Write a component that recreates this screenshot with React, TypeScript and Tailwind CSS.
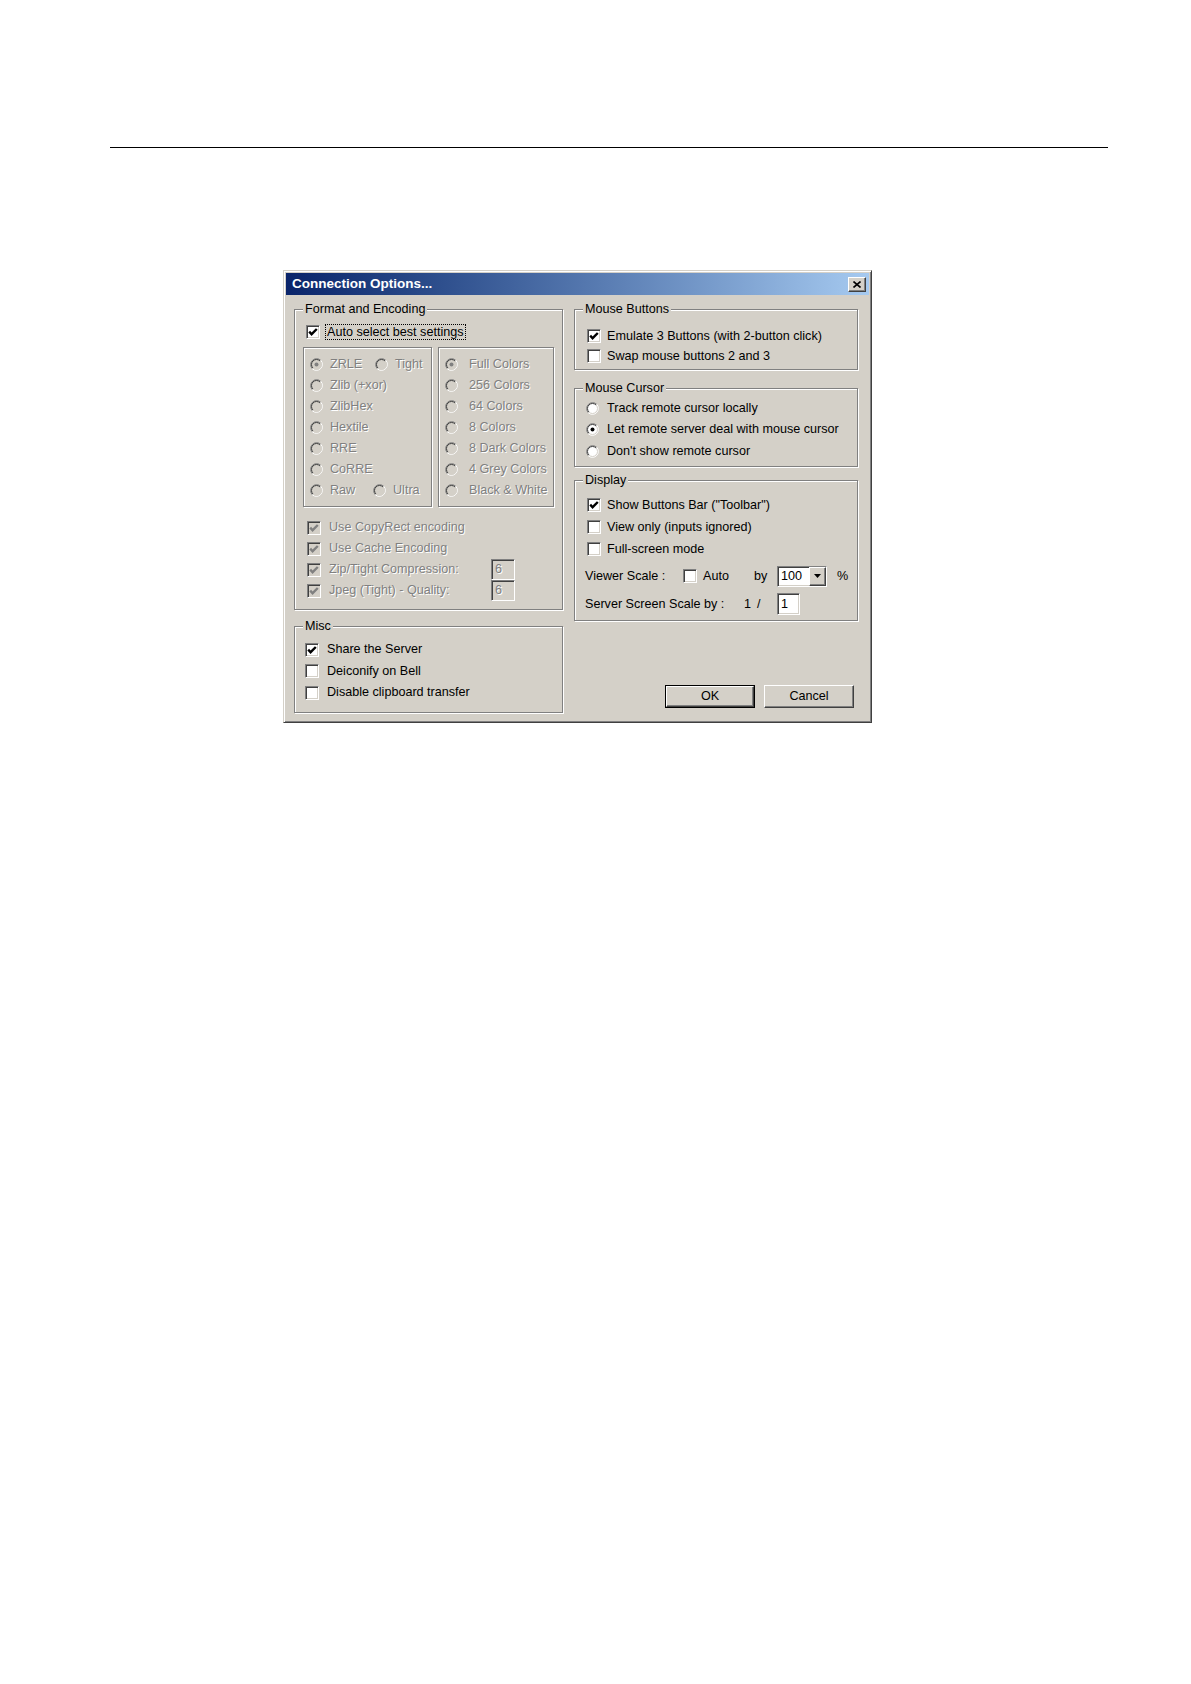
import type { ReactNode } from "react";

const sunken =
  "border border-t-[#808080] border-l-[#808080] border-r-white border-b-white shadow-[inset_1px_1px_0_#404040,inset_-1px_-1px_0_#d4d0c8]";
const raised =
  "border border-t-white border-l-white border-r-[#404040] border-b-[#404040] shadow-[inset_-1px_-1px_0_#808080,inset_1px_1px_0_#d4d0c8]";
const etched = "border border-[#808080] shadow-[1px_1px_0_#fff,inset_1px_1px_0_#fff]";
const dis = "text-[#808080] [text-shadow:1px_1px_0_#fff]";

function Checkbox({ checked = false, disabled = false }: { checked?: boolean; disabled?: boolean }) {
  return (
    <span
      className={`${sunken} flex h-[14px] w-[14px] shrink-0 ${disabled ? "bg-[#d4d0c8]" : "bg-white"}`}
    >
      {checked && (
        <svg viewBox="0 0 12 12" className="h-full w-full">
          <path
            d="M2.2 5.6L4.6 8.2L9.8 3"
            fill="none"
            stroke={disabled ? "#808080" : "#000"}
            strokeWidth="2.4"
          />
        </svg>
      )}
    </span>
  );
}

function Radio({ checked = false, disabled = false }: { checked?: boolean; disabled?: boolean }) {
  return (
    <svg viewBox="0 0 13 13" className="h-[13px] w-[13px] shrink-0">
      <circle cx="6.5" cy="6.5" r="5.5" fill={disabled ? "#d4d0c8" : "#fff"} />
      <path d="M2.26 10.74A6 6 0 0 1 10.74 2.26" fill="none" stroke="#808080" />
      <path d="M10.74 2.26A6 6 0 0 1 2.26 10.74" fill="none" stroke="#fff" />
      <path d="M2.96 10.04A5 5 0 0 1 10.04 2.96" fill="none" stroke="#404040" />
      <path d="M10.04 2.96A5 5 0 0 1 2.96 10.04" fill="none" stroke="#d4d0c8" />
      {checked && <circle cx="6.5" cy="6.5" r="2" fill={disabled ? "#808080" : "#000"} />}
    </svg>
  );
}

function Group({ label, className = "", children }: { label: string; className?: string; children: ReactNode }) {
  return (
    <fieldset className={`${etched} ${className}`}>
      <legend className="ml-[8px] bg-[#d4d0c8] px-[2px] leading-[14px]">{label}</legend>
      {children}
    </fieldset>
  );
}

function CheckRow({ label, checked, h = "h-[20px]" }: { label: string; checked?: boolean; h?: string }) {
  return (
    <div className={`flex ${h} items-center`}>
      <Checkbox checked={checked} />
      <span className="ml-[6px]">{label}</span>
    </div>
  );
}

export default function App() {
  return (
    <div className="min-h-[1684px] bg-white pt-[147px] font-['Liberation_Sans',Arial,sans-serif] text-[12.6px] text-black">
      <div className="ml-[110px] h-px w-[998px] bg-black" />

      <div
        className={`ml-[283px] mt-[122px] flex h-[453px] w-[589px] flex-col border border-[#d4d0c8] border-r-[#404040] border-b-[#404040] bg-[#d4d0c8] p-[2px] shadow-[inset_1px_1px_0_#fff,inset_-1px_-1px_0_#808080]`}
      >
        {/* Title bar */}
        <div className="flex h-[22px] shrink-0 items-center justify-between bg-linear-to-r from-[#0a246a] to-[#a6caf0] pl-[6px] pr-[3px]">
          <span className="text-[13.5px] font-bold leading-none text-white">Connection Options...</span>
          <button className={`${raised} flex h-[15px] w-[18px] items-center justify-center bg-[#d4d0c8]`}>
            <svg viewBox="0 0 8 7" className="h-[7px] w-[8px]">
              <path d="M0.5 0.5L7.5 6.5M7.5 0.5L0.5 6.5" stroke="#000" strokeWidth="1.6" />
            </svg>
          </button>
        </div>

        <div className="flex gap-[11px] pl-[8px] pt-[7px]">
          {/* Left column */}
          <div className="flex w-[269px] flex-col">
            <Group label="Format and Encoding">
              <div className="px-[8px] pb-[8px] pt-[6px]">
                <div className="flex h-[20px] items-center pl-[3px]">
                  <Checkbox checked />
                  <span className="ml-[5px] border border-dotted border-black px-[1px] leading-[14px]">
                    Auto select best settings
                  </span>
                </div>

                <div className="mt-[5px] flex gap-[6px]">
                  <div className={`${etched} h-[160px] w-[129px] pl-[6px] pt-[6px]`}>
                    <div className="flex h-[21px] items-center">
                      <Radio checked disabled />
                      <span className={`ml-[7px] w-[45px] ${dis}`}>ZRLE</span>
                      <Radio disabled />
                      <span className={`ml-[7px] ${dis}`}>Tight</span>
                    </div>
                    {["Zlib (+xor)", "ZlibHex", "Hextile", "RRE", "CoRRE"].map((t) => (
                      <div key={t} className="flex h-[21px] items-center">
                        <Radio disabled />
                        <span className={`ml-[7px] ${dis}`}>{t}</span>
                      </div>
                    ))}
                    <div className="flex h-[21px] items-center">
                      <Radio disabled />
                      <span className={`ml-[7px] w-[43px] ${dis}`}>Raw</span>
                      <Radio disabled />
                      <span className={`ml-[7px] ${dis}`}>Ultra</span>
                    </div>
                  </div>

                  <div className={`${etched} h-[160px] w-[116px] pl-[6px] pt-[6px]`}>
                    {[
                      "Full Colors",
                      "256 Colors",
                      "64 Colors",
                      "8 Colors",
                      "8 Dark Colors",
                      "4 Grey Colors",
                      "Black & White",
                    ].map((t, i) => (
                      <div key={t} className="flex h-[21px] items-center whitespace-nowrap">
                        <Radio checked={i === 0} disabled />
                        <span className={`ml-[11px] ${dis}`}>{t}</span>
                      </div>
                    ))}
                  </div>
                </div>

                <div className="mt-[10px]">
                  {["Use CopyRect encoding", "Use Cache Encoding"].map((t) => (
                    <div key={t} className="flex h-[21px] items-center pl-[4px]">
                      <Checkbox checked disabled />
                      <span className={`ml-[8px] ${dis}`}>{t}</span>
                    </div>
                  ))}
                  {["Zip/Tight Compression:", "Jpeg (Tight) - Quality:"].map((t) => (
                    <div key={t} className="flex h-[21px] items-center pl-[4px]">
                      <Checkbox checked disabled />
                      <span className={`ml-[8px] w-[162px] ${dis}`}>{t}</span>
                      <span
                        className={`${sunken} flex h-[21px] w-[24px] shrink-0 items-center bg-[#d4d0c8] pl-[3px] ${dis}`}
                      >
                        6
                      </span>
                    </div>
                  ))}
                </div>
              </div>
            </Group>

            <Group label="Misc" className="mt-[9px]">
              <div className="px-[10px] pb-[8px] pt-[6px]">
                {[
                  ["Share the Server", true],
                  ["Deiconify on Bell", false],
                  ["Disable clipboard transfer", false],
                ].map(([t, c]) => (
                  <div key={t as string} className="flex h-[21.5px] items-center">
                    <Checkbox checked={c as boolean} />
                    <span className="ml-[8px]">{t as string}</span>
                  </div>
                ))}
              </div>
            </Group>
          </div>

          {/* Right column */}
          <div className="flex w-[284px] flex-col">
            <Group label="Mouse Buttons">
              <div className="pb-[3px] pl-[12px] pt-[10px]">
                <CheckRow label="Emulate 3 Buttons (with 2-button click)" checked />
                <CheckRow label="Swap mouse buttons 2 and 3" />
              </div>
            </Group>

            <Group label="Mouse Cursor" className="mt-[11px]">
              <div className="pb-[4px] pl-[11px] pt-[2.5px]">
                {[
                  ["Track remote cursor locally", false],
                  ["Let remote server deal with mouse cursor", true],
                  ["Don't show remote cursor", false],
                ].map(([t, c]) => (
                  <div key={t as string} className="flex h-[21.5px] items-center">
                    <Radio checked={c as boolean} />
                    <span className="ml-[8px]">{t as string}</span>
                  </div>
                ))}
              </div>
            </Group>

            <Group label="Display" className="mt-[6px]">
              <div className="pb-[4px] pl-[12px] pt-[7px]">
                <CheckRow label={'Show Buttons Bar ("Toolbar")'} checked h="h-[22px]" />
                <CheckRow label="View only (inputs ignored)" h="h-[22px]" />
                <CheckRow label="Full-screen mode" h="h-[22px]" />

                <div className="-ml-[2px] mt-[5px] flex h-[22px] items-center">
                  <span className="w-[98px]">Viewer Scale :</span>
                  <Checkbox />
                  <span className="ml-[6px] w-[51px]">Auto</span>
                  <span className="w-[23px]">by</span>
                  <span className={`${sunken} flex h-[21px] w-[50px] items-center bg-white pl-[3px]`}>
                    <span className="flex-1">100</span>
                    <span className={`${raised} flex h-full w-[17px] items-center justify-center bg-[#d4d0c8]`}>
                      <svg viewBox="0 0 7 4" className="h-[4px] w-[7px]">
                        <path d="M0 0h7L3.5 4z" fill="#000" />
                      </svg>
                    </span>
                  </span>
                  <span className="ml-[10px]">%</span>
                </div>

                <div className="-ml-[2px] mt-[5px] flex h-[24px] items-center">
                  <span className="w-[159px]">Server Screen Scale by :</span>
                  <span className="w-[13px]">1</span>
                  <span className="w-[20px]">/</span>
                  <span className={`${sunken} flex h-[22px] w-[23px] items-center bg-white pl-[3px]`}>1</span>
                </div>
              </div>
            </Group>

            <div className="mt-[64px] flex justify-end gap-[9px] pr-[4px]">
              <button className="h-[23px] w-[90px] border border-black">
                <span className={`${raised} flex h-full w-full items-center justify-center bg-[#d4d0c8]`}>OK</span>
              </button>
              <button className={`${raised} flex h-[23px] w-[90px] items-center justify-center bg-[#d4d0c8]`}>
                Cancel
              </button>
            </div>
          </div>
        </div>
      </div>
    </div>
  );
}
